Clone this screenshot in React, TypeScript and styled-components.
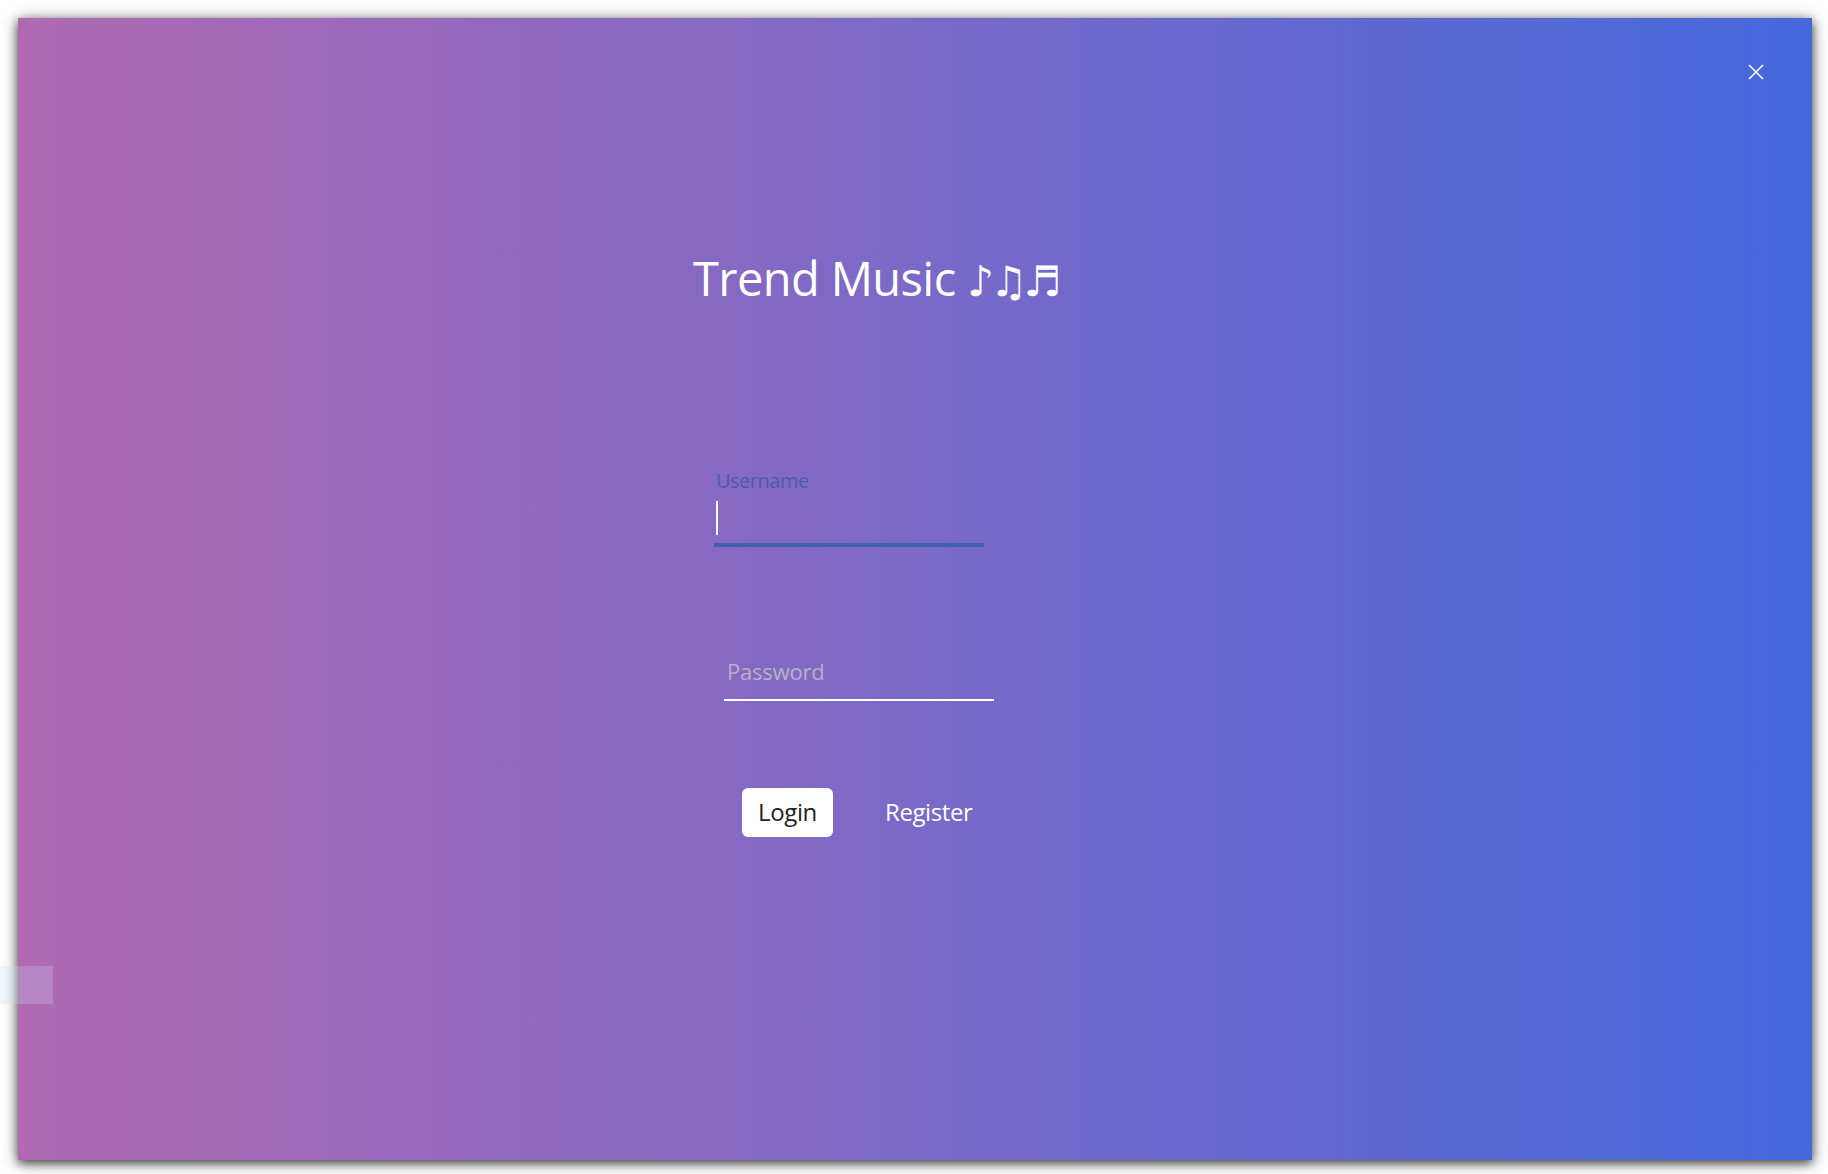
import React from "react";
import styled, { createGlobalStyle } from "styled-components";

const GlobalStyle = createGlobalStyle`
  html, body {
    margin: 0;
    padding: 0;
    background: #ffffff;
    font-family: "Open Sans", "DejaVu Sans", sans-serif;
  }
  * { box-sizing: border-box; }
`;

const Page = styled.div`
  position: relative;
  width: 1828px;
  height: 1174px;
  padding: 18px;
  overflow: hidden;
`;

const Window = styled.main`
  width: 1794px;
  height: 1142px;
  display: flex;
  flex-direction: column;
  background: linear-gradient(90deg, #b06ab3 0%, #4568dc 100%);
  box-shadow: 0 3px 10px rgba(0, 0, 0, 0.7), 0 2px 18px rgba(0, 0, 0, 0.25);
`;

const TitleBar = styled.div`
  display: flex;
  justify-content: flex-end;
  padding: 46px 48px 0 0;
`;

const CloseButton = styled.button`
  width: 16px;
  height: 16px;
  padding: 0;
  border: none;
  background: transparent;
  cursor: pointer;
  display: flex;
  svg { display: block; }
`;

const Content = styled.div`
  display: flex;
  flex-direction: column;
  align-items: flex-start;
  padding-left: 675px;
`;

const Title = styled.h1`
  margin: 169px 0 0;
  font-family: "Open Sans", "DejaVu Sans", sans-serif;
  font-weight: 400;
  font-size: 47px;
  line-height: 58px;
  letter-spacing: -0.6px;
  color: #ffffff;
  white-space: nowrap;
`;

const Notes = styled.span`
  font-family: "DejaVu Sans", sans-serif;
  font-size: 42px;
  letter-spacing: -4px;
`;

const Field = styled.div<{ $indent: number; $top: number }>`
  display: flex;
  flex-direction: column;
  width: 270px;
  margin-left: ${(p) => p.$indent}px;
  margin-top: ${(p) => p.$top}px;
`;

const FloatLabel = styled.label`
  padding-left: 2px;
  font-size: 20px;
  line-height: 24px;
  color: #4a5cb0;
  letter-spacing: -0.5px;
`;

const ActiveInput = styled.div`
  height: 54px;
  padding: 8px 0 0 2px;
  border-bottom: 4px solid #4360ad;
`;

const Caret = styled.span`
  display: block;
  width: 2px;
  height: 34px;
  background: #ffffff;
`;

const TextInput = styled.input`
  width: 270px;
  padding: 4px 2px 13px 3px;
  font-family: "Open Sans", sans-serif;
  font-size: 22px;
  line-height: 30px;
  height: 49px;
  color: #ffffff;
  background: transparent;
  border: none;
  border-bottom: 2px solid #ffffff;
  outline: none;
  letter-spacing: -0.2px;
  &::placeholder {
    color: #b5b3c4;
    opacity: 1;
  }
`;

const Actions = styled.div`
  display: flex;
  align-items: center;
  gap: 52px;
  margin: 87px 0 0 49px;
`;

const PrimaryButton = styled.button`
  width: 91px;
  height: 49px;
  padding: 0 0 2px;
  border: none;
  border-radius: 6px;
  background: #ffffff;
  color: #222222;
  font-family: "Open Sans", sans-serif;
  font-size: 24px;
  line-height: 47px;
  letter-spacing: -0.4px;
  cursor: pointer;
`;

const LinkButton = styled.button`
  padding: 0 0 2px;
  border: none;
  background: transparent;
  color: #ffffff;
  font-family: "Open Sans", sans-serif;
  font-size: 24px;
  line-height: 47px;
  letter-spacing: -0.4px;
  cursor: pointer;
`;

const TooltipGhost = styled.div`
  position: absolute;
  left: 0;
  top: 966px;
  width: 53px;
  height: 38px;
  background: rgba(205, 225, 245, 0.25);
  pointer-events: none;
`;

export default function App() {
  return (
    <>
      <GlobalStyle />
      <Page>
        <Window>
          <TitleBar>
            <CloseButton aria-label="Close">
              <svg width="16" height="16" viewBox="0 0 16 16">
                <path d="M1 1 L15 15 M15 1 L1 15" stroke="#ffffff" strokeWidth="1.6" fill="none" />
              </svg>
            </CloseButton>
          </TitleBar>
          <Content>
            <Title>
              Trend Music <Notes>♪♫♬</Notes>
            </Title>
            <Field $indent={21} $top={158}>
              <FloatLabel>Username</FloatLabel>
              <ActiveInput>
                <Caret />
              </ActiveInput>
            </Field>
            <Field $indent={31} $top={105}>
              <TextInput type="password" placeholder="Password" />
            </Field>
            <Actions>
              <PrimaryButton>Login</PrimaryButton>
              <LinkButton>Register</LinkButton>
            </Actions>
          </Content>
        </Window>
        <TooltipGhost />
      </Page>
    </>
  );
}
